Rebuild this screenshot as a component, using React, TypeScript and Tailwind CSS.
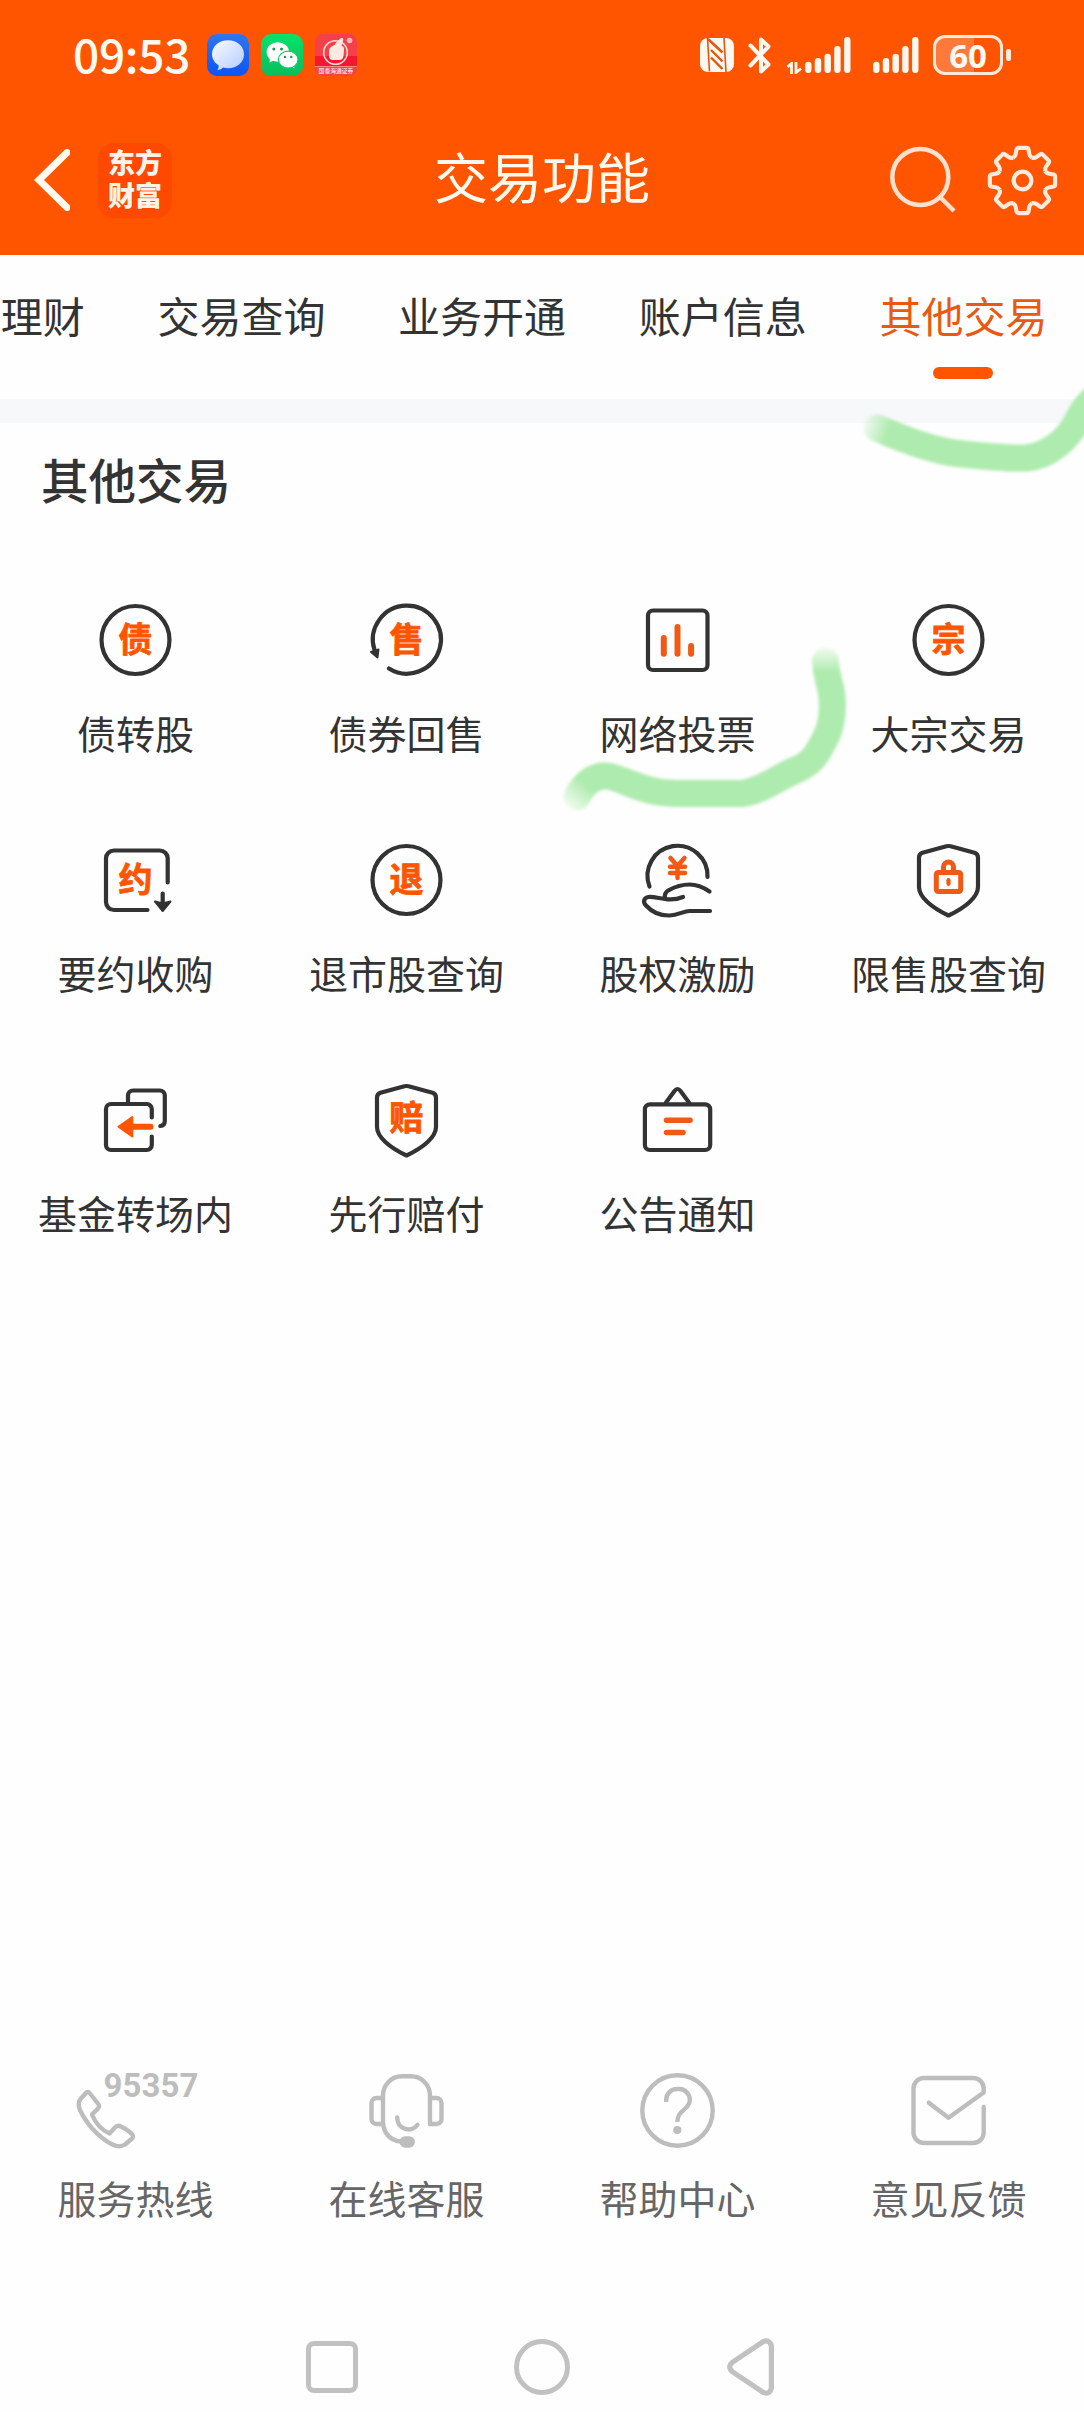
import type { ReactNode } from "react";

const tabs = ["理财", "交易查询", "业务开通", "账户信息", "其他交易"];

const SHIELD =
  "M36 6.8Q40 5.2 44 6.8L66 12.8Q69.5 14 69.5 17.5V47C69.5 57 57 67.5 40 75.5C23 67.5 10.5 57 10.5 47V17.5Q10.5 14 14 12.8Z";

function Icon({ children }: { children: ReactNode }) {
  return (
    <svg
      className="w-20 h-20 overflow-visible"
      viewBox="0.5 0 80 80"
      fill="none"
      stroke="#333333"
      strokeWidth={4.2}
      strokeLinecap="round"
      strokeLinejoin="round"
    >
      {children}
    </svg>
  );
}

function Glyph({ y = 52, children }: { y?: number; children: string }) {
  return (
    <text x={40} y={y} textAnchor="middle" fontSize={34} fill="#ff5500" stroke="#ff5500" strokeWidth={0.8} className="font-bold">
      {children}
    </text>
  );
}

const services = [
  {
    title: "债转股",
    icon: (
      <Icon>
        <circle cx={40} cy={40} r={34} />
        <Glyph>债</Glyph>
      </Icon>
    ),
  },
  {
    title: "债券回售",
    icon: (
      <Icon>
        <path d="M8 50A34 34 0 1 1 22.4 68.5" />
        <path d="M4.5 52L12 49.5L11 57.5Z" fill="#333333" strokeWidth={2} />
        <Glyph>售</Glyph>
      </Icon>
    ),
  },
  {
    title: "网络投票",
    icon: (
      <Icon>
        <rect x={10.5} y={10.5} width={59.5} height={59.5} rx={5} />
        <path d="M26.3 38V53.7M40 27V53.7M53.6 46V53.7" stroke="#f05a14" strokeWidth={6} />
      </Icon>
    ),
  },
  {
    title: "大宗交易",
    icon: (
      <Icon>
        <circle cx={40} cy={40} r={34} />
        <Glyph>宗</Glyph>
      </Icon>
    ),
  },
  {
    title: "要约收购",
    icon: (
      <Icon>
        <path d="M72.2 42.5V18.5a8 8 0 0 0-8-8H18.5a8 8 0 0 0-8 8V62a8 8 0 0 0 8 8H52" />
        <path d="M67.2 53.5V64" />
        <path d="M59.5 61.5Q67 64.5 75 61.5L67.2 71Z" fill="#333333" strokeWidth={2} />
        <Glyph>约</Glyph>
      </Icon>
    ),
  },
  {
    title: "退市股查询",
    icon: (
      <Icon>
        <circle cx={40} cy={40} r={34} />
        <Glyph>退</Glyph>
      </Icon>
    ),
  },
  {
    title: "股权激励",
    icon: (
      <Icon>
        <path d="M12 46.5A30 30 0 1 1 70 37" />
        <path d="M72 51.5Q62 44.5 52 44.5C44 44.5 36 47.5 31 50.3Q26.5 53 27.5 58.5" />
        <path d="M45.5 57Q38 60 30 59.3C22 58.5 16 56.5 11 57C6.500 57.500 5 62 8.500 65.500C14 71.500 22 75.800 32 75.500C41 75.200 46 71 52 71H72.500" />
        <path d="M33 18L40 26L47 18M40 26V38M32.5 26.7H47.5M32.5 33H47.5" stroke="#f05a14" strokeWidth={4.5} />
      </Icon>
    ),
  },
  {
    title: "限售股查询",
    icon: (
      <Icon>
        <path d={SHIELD} />
        <g stroke="#f05a14">
          <rect x={27.8} y={32.5} width={24.4} height={19} rx={2} strokeWidth={5} />
          <path d="M35 31V27a5 5 0 0 1 10 0V31" strokeWidth={5} />
          <path d="M40 40.2V43.8" />
        </g>
      </Icon>
    ),
  },
  {
    title: "基金转场内",
    icon: (
      <Icon>
        <path d="M32.5 23V15.5a5 5 0 0 1 5-5H64.3a5 5 0 0 1 5 5V41q0 4.5-4.5 5" />
        <path d="M56.3 37.5V29a5 5 0 0 0-5-5H15.5a5 5 0 0 0-5 5V65a5 5 0 0 0 5 5H51.3a5 5 0 0 0 5-5V56.5" />
        <path d="M36 46.7H55" stroke="#ff5500" strokeWidth={6} />
        <path d="M23 46.7L36.8 37V56.5Z" fill="#ff5500" stroke="#ff5500" strokeWidth={2} />
      </Icon>
    ),
  },
  {
    title: "先行赔付",
    icon: (
      <Icon>
        <path d={SHIELD} />
        <Glyph y={50}>赔</Glyph>
      </Icon>
    ),
  },
  {
    title: "公告通知",
    icon: (
      <Icon>
        <rect x={7.4} y={24.3} width={65.3} height={45.7} rx={5} />
        <path d="M28.5 22.5L37 11Q40 7 43 11L51.5 22.5" />
        <path d="M29 40.3H52.6M29 52.6H45.5" stroke="#f05a14" strokeWidth={5.5} />
      </Icon>
    ),
  },
];

const support = [
  {
    title: "服务热线",
    icon: (
      <>
        <path d="M-10 23.5Q-7.7 20.5 -5.5 23.5L2.8 34Q4.5 36.5 2.3 38.8L-3.6 44.5C0 53 6 60 14 63.5L19.5 57.5Q22 54.5 25.5 56.5Q31.5 59.5 36 63.5Q39 66.5 36 69L29.5 74.5Q24 78 17 74.5C2 67 -10 52 -15.5 40Q-18.5 33 -14.5 28.5Z" />
        <text x={8} y={27} fontSize={33} textLength={95} fill="#bdbdbd" stroke="none" className="font-['Roboto'] font-bold">
          95357
        </text>
      </>
    ),
  },
  {
    title: "在线客服",
    icon: (
      <>
        <path d="M63.5 54V25.5A19 19 0 0 0 44.5 6.3H35.5A19 19 0 0 0 16.5 25.5V53Q18 69 34 71.7" />
        <path d="M16.5 28H10a5 5 0 0 0-5 5V49a5 5 0 0 0 5 5H16.5M63.5 28H70a5 5 0 0 1 5 5V49a5 5 0 0 1-5 5H63.5" />
        <rect x={33} y={66.2} width={15.4} height={11.5} rx={5.7} fill="#bdbdbd" stroke="none" />
        <path d="M30.7 47.5C31 60 45 63 51 54.8" />
      </>
    ),
  },
  {
    title: "帮助中心",
    icon: (
      <>
        <circle cx={40} cy={40.5} r={35.2} />
        <path d="M28.7 32V29.5A10.7 10.7 0 0 1 39.4 19H42A10.7 10.7 0 0 1 52.3 30C52.3 40 39.8 39.5 39.8 52" strokeLinecap="butt" />
        <circle cx={39.8} cy={60} r={4.1} fill="#bdbdbd" stroke="none" />
      </>
    ),
  },
  {
    title: "意见反馈",
    icon: (
      <path d="M20.3 32.7L40 47.7L75.2 22.5V18.5a10.5 10.5 0 0 0-10.5-10.5H15.5a10.5 10.5 0 0 0-10.5 10.5V62.5a10.5 10.5 0 0 0 10.5 10.5H64.7a10.5 10.5 0 0 0 10.5-10.5V37" />
    ),
  },
];

const teeth = [0, 45, 90, 135, 180, 225, 270, 315];

function SignalBars() {
  return (
    <svg className="w-[46px] h-9" viewBox="0 0 46 36" stroke="#fff8f0" strokeWidth={6.4} strokeLinecap="round">
      <path d="M3.3 28V32.7M13 24.3V32.7M22.7 20V32.7M32.4 12.3V32.7M42.3 3.3V32.7" />
    </svg>
  );
}

function StatusBar() {
  return (
    <div className="flex h-[110px] items-center pl-[73px] pr-[73px]">
      <span className="w-[134px] pb-[5px] text-[46px] leading-none font-medium tracking-[-0.3px] text-[#fffaf2]">09:53</span>

      {/* Notification icons */}
      <div className="flex gap-3">
        <svg className="w-[42px] h-[42px]" viewBox="0 0 42 42">
          <defs>
            <linearGradient id="blue" x1="0" y1="0" x2="0" y2="1">
              <stop offset="0" stopColor="#2f76ee" />
              <stop offset="1" stopColor="#0b55f5" />
            </linearGradient>
            <linearGradient id="bubble" x1="0" y1="0" x2="1" y2="1">
              <stop offset="0.1" stopColor="#f2f6ff" />
              <stop offset="1" stopColor="#b4ccff" />
            </linearGradient>
          </defs>
          <rect width={42} height={42} rx={10} fill="url(#blue)" />
          <path d="M21 6.2c9 0 16 6 16 14s-7 14-16 14c-2 0-3.600-.3-5-.8-1.300 1.500-3.200 2.400-5.500 2.600 1-1.400 1.300-3 1-4.700C7.600 28.800 5 24.800 5 20.200c0-8 7-14 16-14z" fill="url(#bubble)" />
        </svg>
        <svg className="w-[42px] h-[42px]" viewBox="0 0 42 42">
          <defs>
            <linearGradient id="green" x1="0" y1="0" x2="0" y2="1">
              <stop offset="0" stopColor="#05e36c" />
              <stop offset="1" stopColor="#09bd5c" />
            </linearGradient>
          </defs>
          <rect width={42} height={42} rx={10} fill="url(#green)" />
          <path d="M9 24L8.5 28.5L13.5 26Z" fill="#fff" />
          <ellipse cx={16.8} cy={18} rx={11.2} ry={9.8} fill="#fff" />
          <path d="M30 32.5L33.5 34.5L33 30Z" fill="#fff" />
          <ellipse cx={27.2} cy={25.6} rx={9.8} ry={8.5} fill="#fff" stroke="#08cd62" strokeWidth={1.2} />
          <g fill="#0a9f4d">
            <circle cx={12.8} cy={15} r={1.5} />
            <circle cx={20.5} cy={15} r={1.5} />
            <circle cx={24} cy={23} r={1.2} />
            <circle cx={30.3} cy={23} r={1.2} />
          </g>
        </svg>
        <svg className="w-[42px] h-[42px]" viewBox="0 0 42 42">
          <rect width={42} height={42} rx={8} fill="#f5404a" />
          <path d="M0 22H42V32H0Z" fill="#f6162f" />
          <path d="M0 32.5H42" stroke="#ff8a80" strokeWidth={1} />
          <circle cx={20.5} cy={18.5} r={11.8} fill="none" stroke="#ffd9d2" strokeWidth={1.6} />
          <path d="M16 13q4-1.5 6-5.5l4-3.5q3-.5 2 3l-1.5 5q3 .5 2.500 4l-.5 6q-.5 4-4 4H18q-4 0-4-4v-5q0-3 2-4z" fill="#ffeae2" />
          <circle cx={34.5} cy={6.5} r={2.8} fill="#ffb9b3" />
          <text x={21} y={39} textAnchor="middle" fontSize={5.8} fill="#ffd6d2" className="font-bold">国泰海通证券</text>
        </svg>
      </div>

      <div className="ml-auto flex items-center">
        {/* NFC */}
        <svg className="w-[34px] h-[34px]" viewBox="0 0 34 34" fill="none" stroke="#e0560f">
          <rect width={34} height={34} rx={8} fill="#fff8f0" stroke="none" />
          <path d="M7.5 0L9.500 33.500M24 0L26 34" strokeWidth={1.6} />
          <path d="M8 1L22.5 14.500M11 12L22.500 23.500M11 19.500L22.500 31" strokeWidth={2.4} />
        </svg>
        {/* Bluetooth */}
        <svg className="ml-[14px] w-6 h-[37px]" viewBox="0 0 24 37" fill="none" stroke="#fff8f0" strokeWidth={4} strokeLinecap="round" strokeLinejoin="round">
          <path d="M2.5 8.5L20.5 27.5L13 34.5V2.5L20.5 9.5L2.5 28.5" />
        </svg>
        <svg className="ml-[15px] mt-[26px] w-[15px] h-3" viewBox="0 0 15 12" fill="none" stroke="#fff8f0" strokeWidth={2.8}>
          <path d="M0.5 5L4.5 1.5V12M9 0V10.5L14 6.5" />
        </svg>
        <div className="ml-[3px]">
          <SignalBars />
        </div>
        <div className="ml-[22px]">
          <SignalBars />
        </div>
        {/* Battery */}
        <div className="ml-[14px] flex items-center gap-[3px]">
          <div className="flex h-10 w-[70px] items-center justify-center rounded-[12px] border-[3px] border-[#ffe9da] bg-[linear-gradient(90deg,#ff7a3a_60%,transparent_60%)]">
            <span className="font-['Open_Sans'] text-[33px] leading-none font-bold text-[#fffaf2]">60</span>
          </div>
          <div className="h-3 w-[5px] rounded-[2px] bg-[#ffe9da]" />
        </div>
      </div>
    </div>
  );
}

function TitleBar() {
  return (
    <div className="grid h-[140px] grid-cols-[1fr_auto_1fr] items-center">
      <div className="flex items-center pl-[34px]">
        <svg className="w-9 h-[62px]" viewBox="0 0 36 62" fill="none" stroke="#fffaf0" strokeWidth={7}>
          <path d="M33 3.500L5 31L33 58.500" strokeLinecap="round" />
        </svg>
        <div className="ml-[28px] flex h-[75px] w-[74px] items-center justify-center rounded-[16px] bg-[#ff4800] pb-[5px]">
          <p className="w-[54px] text-[27px] leading-[33px] font-black break-all text-[#fff3ec]">东方财富</p>
        </div>
      </div>
      <h1 className="pb-[9px] text-[54px] leading-none font-normal text-[#fffaf0]">交易功能</h1>
      <div className="flex items-center justify-end pr-[26px]">
        <svg className="w-[68px] h-[68px]" viewBox="0 0 68 68" fill="none" stroke="#ffe0cf" strokeWidth={4.5}>
          <circle cx={32.3} cy={31} r={28} />
          <path d="M51.5 50.5L66 65" />
        </svg>
        <svg className="ml-[31px] w-[71px] h-[71px]" viewBox="-35.5 -35.5 71 71" fill="none" stroke="#ffeade" strokeWidth={4.2}>
          {teeth.map((deg) => (
            <path
              key={deg}
              transform={`rotate(${deg})`}
              d="M-9.4 -22.7Q-7.2 -24 -6.7 -27L-6 -31Q-5.6 -32.6 -4 -32.6H4Q5.6 -32.6 6 -31L6.7 -27Q7.2 -24 9.4 -22.7"
            />
          ))}
          <circle r={8.8} />
        </svg>
      </div>
    </div>
  );
}

/* Highlighter strokes drawn over the page */
function Marker() {
  return (
    <svg className="pointer-events-none absolute inset-0 h-[900px] w-[1084px]" viewBox="0 0 1084 900" fill="none">
      <defs>
        <filter id="soft" x="-10%" y="-20%" width="120%" height="140%">
          <feGaussianBlur stdDeviation={1.8} />
        </filter>
        <linearGradient id="fadeTop" gradientUnits="userSpaceOnUse" x1={862} y1={424} x2={888} y2={433}>
          <stop offset="0" stopColor="#aeebae" stopOpacity={0.1} />
          <stop offset="1" stopColor="#aeebae" />
        </linearGradient>
        <linearGradient id="fadeStart" gradientUnits="userSpaceOnUse" x1={567} y1={808} x2={587} y2={785}>
          <stop offset="0" stopColor="#aeebae" stopOpacity={0.1} />
          <stop offset="1" stopColor="#aeebae" />
        </linearGradient>
        <linearGradient id="fadeEnd" gradientUnits="userSpaceOnUse" x1={0} y1={646} x2={0} y2={672}>
          <stop offset="0" stopColor="#aeebae" stopOpacity={0.1} />
          <stop offset="1" stopColor="#aeebae" />
        </linearGradient>
      </defs>
      <g filter="url(#soft)" strokeWidth={27} strokeLinecap="round" strokeLinejoin="round">
        <path d="M877 428C900 438 930 450 957 453.5C980 456 1010 458.5 1026 458C1050 456 1068 438 1077 422Q1082 410 1092 400" stroke="url(#fadeTop)" />
        <path
          d="M577 797C585 781 597 774 610 776.5C628 781 645 793 675 793.5H742C763 791 780 776 796 770C815 762 818 751 826 737"
          stroke="url(#fadeStart)"
        />
        <path d="M826 737C835 718 833 695 829 682Q826 671 825.5 661" stroke="url(#fadeEnd)" />
      </g>
    </svg>
  );
}

export default function App() {
  return (
    <div className="relative flex h-[2412px] w-[1084px] flex-col overflow-hidden bg-[#fefefe] font-['Noto_Sans_CJK_SC',sans-serif] text-[#333333]">
      <header className="h-[255px] shrink-0 bg-[#ff5500]">
        <StatusBar />
        <TitleBar />
      </header>

      <nav className="flex h-36 shrink-0 justify-end gap-[72.7px] pt-[39px] pr-[36.5px] text-[42px] leading-none whitespace-nowrap">
        {tabs.map((tab, i) => (
          <div key={tab} className="flex flex-col items-center">
            <span className={i === tabs.length - 1 ? "text-[#e85a14]" : ""}>{tab}</span>
            {i === tabs.length - 1 && <div className="mt-[31px] h-3 w-[60px] rounded-full bg-[#ff5500]" />}
          </div>
        ))}
      </nav>
      <div className="h-6 shrink-0 bg-[#f6f8fa]" />

      <main>
        <h2 className="flex h-[113px] items-center pb-[2px] pl-[41px] text-[47.5px] leading-none font-medium">其他交易</h2>
        <div className="grid grid-cols-4 pt-16">
          {services.map((s) => (
            <div key={s.title} className="flex h-60 flex-col items-center">
              {s.icon}
              <span className="mt-8 text-[39px] leading-10">{s.title}</span>
            </div>
          ))}
        </div>
      </main>

      <footer className="mt-auto">
        <div className="grid h-[252px] grid-cols-4">
          {support.map((s) => (
            <div key={s.title} className="flex flex-col items-center">
              <svg
                className="w-20 h-20 overflow-visible"
                viewBox="0.5 0 80 80"
                fill="none"
                stroke="#bdbdbd"
                strokeWidth={4.4}
                strokeLinecap="round"
                strokeLinejoin="round"
              >
                {s.icon}
              </svg>
              <span className="mt-[27px] text-[39px] leading-10 text-[#666666]">{s.title}</span>
            </div>
          ))}
        </div>

        {/* System navigation */}
        <div className="flex h-[90px] items-center pl-[306px]">
          <div className="h-[52px] w-[52px] rounded-[8px] border-[5px] border-[#c1c1c1]" />
          <div className="ml-[156px] h-14 w-14 rounded-full border-[5px] border-[#c1c1c1]" />
          <svg className="ml-[157px] w-[47px] h-[58px]" viewBox="0 0 47 58" fill="none" stroke="#c1c1c1" strokeWidth={5.2}>
            <path d="M36 3.8Q39 2 42 3.8Q44.4 5.5 44.4 9V49Q44.4 52.5 42 54.2Q39 56 36 54.2L5.5 33.8Q0 29 5.5 24.2Z" />
          </svg>
        </div>
      </footer>

      <Marker />
    </div>
  );
}
